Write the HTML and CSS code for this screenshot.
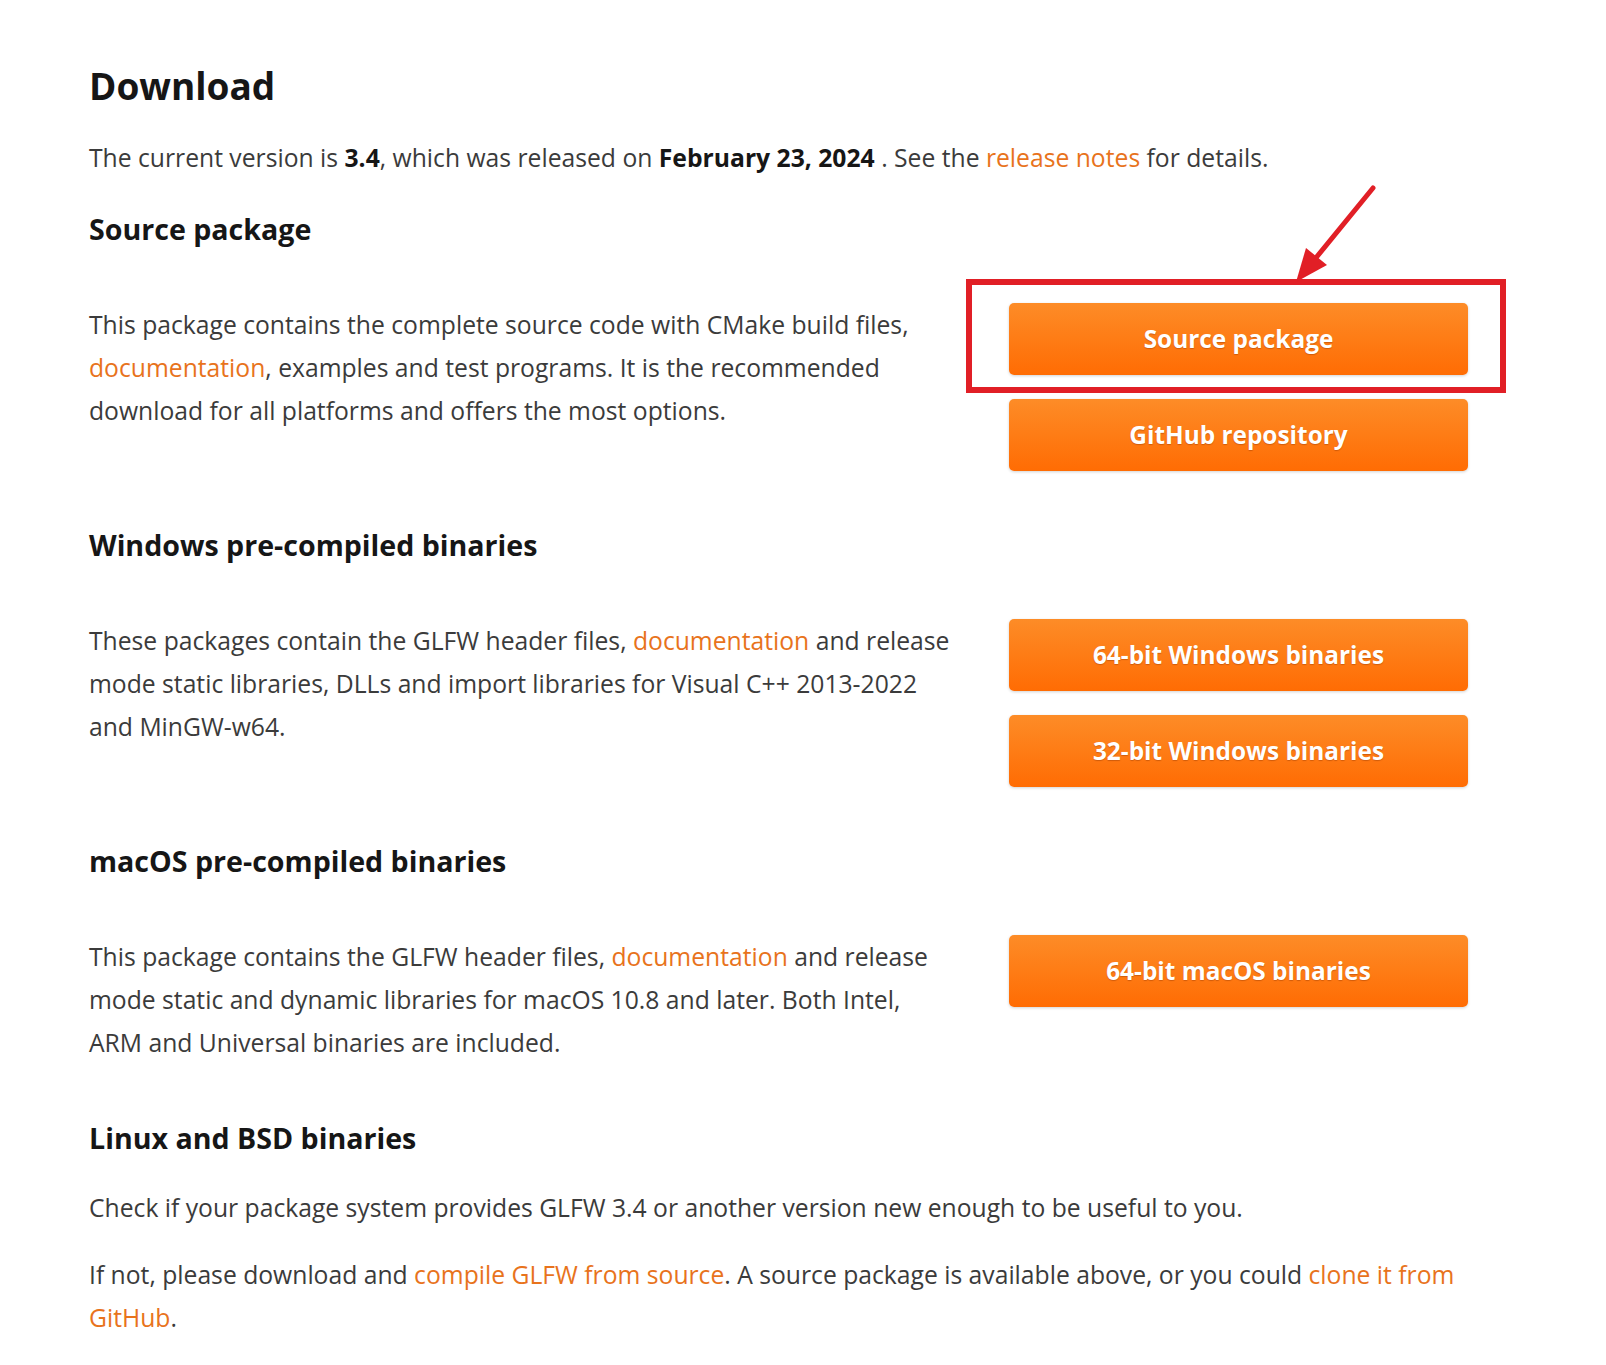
FILE: index.html
```html
<!DOCTYPE html>
<html lang="en">

<head>
    <meta charset="UTF-8">
    <meta name="viewport" content="width=device-width, initial-scale=1.0">
    <title>Download | GLFW</title>
    <link rel="stylesheet" href="styles.css">
</head>

<body>
    <main class="page">
        <h1>Download</h1>
        <p class="lead">The current version is <strong>3.4</strong>, which was released on <strong>February 23, 2024</strong> . See the <a href="#">release notes</a> for details.</p>

        <section class="pkg">
            <h2>Source package</h2>
            <div class="pkg-row">
                <p>This package contains the complete source code with CMake build files,<br>
                    <a href="#">documentation</a>, examples and test programs. It is the recommended<br>
                    download for all platforms and offers the most options.</p>
                <div class="pkg-buttons">
                    <div class="callout">
                        <a class="btn" href="#">Source package</a>
                        <span class="callout-box"></span>
                        <svg class="callout-arrow" width="100" height="110" viewBox="0 0 100 110">
                            <line x1="84" y1="7" x2="26" y2="78" stroke="#e11f26" stroke-width="5" stroke-linecap="round" />
                            <polygon points="7,101 38,84 17,67" fill="#e11f26" />
                        </svg>
                    </div>
                    <a class="btn" href="#">GitHub repository</a>
                </div>
            </div>
        </section>

        <section class="pkg">
            <h2>Windows pre-compiled binaries</h2>
            <div class="pkg-row">
                <p>These packages contain the GLFW header files, <a href="#">documentation</a> and release<br>
                    mode static libraries, DLLs and import libraries for Visual C++ 2013-2022<br>
                    and MinGW-w64.</p>
                <div class="pkg-buttons">
                    <a class="btn" href="#">64-bit Windows binaries</a>
                    <a class="btn" href="#">32-bit Windows binaries</a>
                </div>
            </div>
        </section>

        <section class="pkg">
            <h2>macOS pre-compiled binaries</h2>
            <div class="pkg-row">
                <p>This package contains the GLFW header files, <a href="#">documentation</a> and release<br>
                    mode static and dynamic libraries for macOS 10.8 and later. Both Intel,<br>
                    ARM and Universal binaries are included.</p>
                <div class="pkg-buttons">
                    <a class="btn" href="#">64-bit macOS binaries</a>
                </div>
            </div>
        </section>

        <section class="pkg linux">
            <h2>Linux and BSD binaries</h2>
            <p>Check if your package system provides GLFW 3.4 or another version new enough to be useful to you.</p>
            <p>If not, please download and <a href="#">compile GLFW from source</a>. A source package is available above, or you could <a href="#">clone it from<br>
                GitHub</a>.</p>
        </section>
    </main>
</body>

</html>
```

FILE: styles.css
```css
body {
    margin: 0;
    background: #fff;
    color: #3b3b3b;
    font-family: "Open Sans", "Noto Sans", sans-serif;
    font-size: 24.7px;
    line-height: 43px;
}

a {
    color: #e8731c;
    text-decoration: none;
}

strong {
    color: #161616;
    font-weight: 700;
}

.page {
    width: 1379px;
    padding: 63px 0 60px 89px;
}

h1 {
    margin: 0 0 27px;
    color: #161616;
    font-size: 37px;
    line-height: 46px;
    font-weight: 700;
}

.lead {
    margin: 0;
}

h2 {
    margin: 0 0 56px;
    color: #161616;
    font-size: 28.6px;
    line-height: 36px;
    font-weight: 700;
}

.pkg {
    margin-top: 56px;
}

.pkg:first-of-type {
    margin-top: 32px;
}

.pkg-row {
    display: grid;
    grid-template-columns: 1fr 459px;
    column-gap: 30px;
    align-items: start;
}

.pkg-row p {
    margin: 0;
}

.pkg-buttons {
    display: flex;
    flex-direction: column;
    gap: 24px;
}

.btn {
    display: block;
    height: 72px;
    line-height: 72px;
    border-radius: 5px;
    background: linear-gradient(#fd8c27, #ff6c03);
    box-shadow: 0 1px 3px rgba(0, 0, 0, 0.18);
    color: #fff;
    text-align: center;
    font-size: 24.4px;
    font-weight: 700;
    text-shadow: 0 1px 1px rgba(120, 40, 0, 0.35);
}

/* red annotation around the source button */
.callout {
    position: relative;
}

.callout-box {
    position: absolute;
    top: -24px;
    right: -38px;
    bottom: -18px;
    left: -43px;
    border: 6px solid #e11f26;
    pointer-events: none;
}

.callout-arrow {
    position: absolute;
    left: 280px;
    top: -122px;
}

.linux h2 {
    margin-bottom: 30px;
}

.linux p {
    margin: 0 0 24px;
}
```
